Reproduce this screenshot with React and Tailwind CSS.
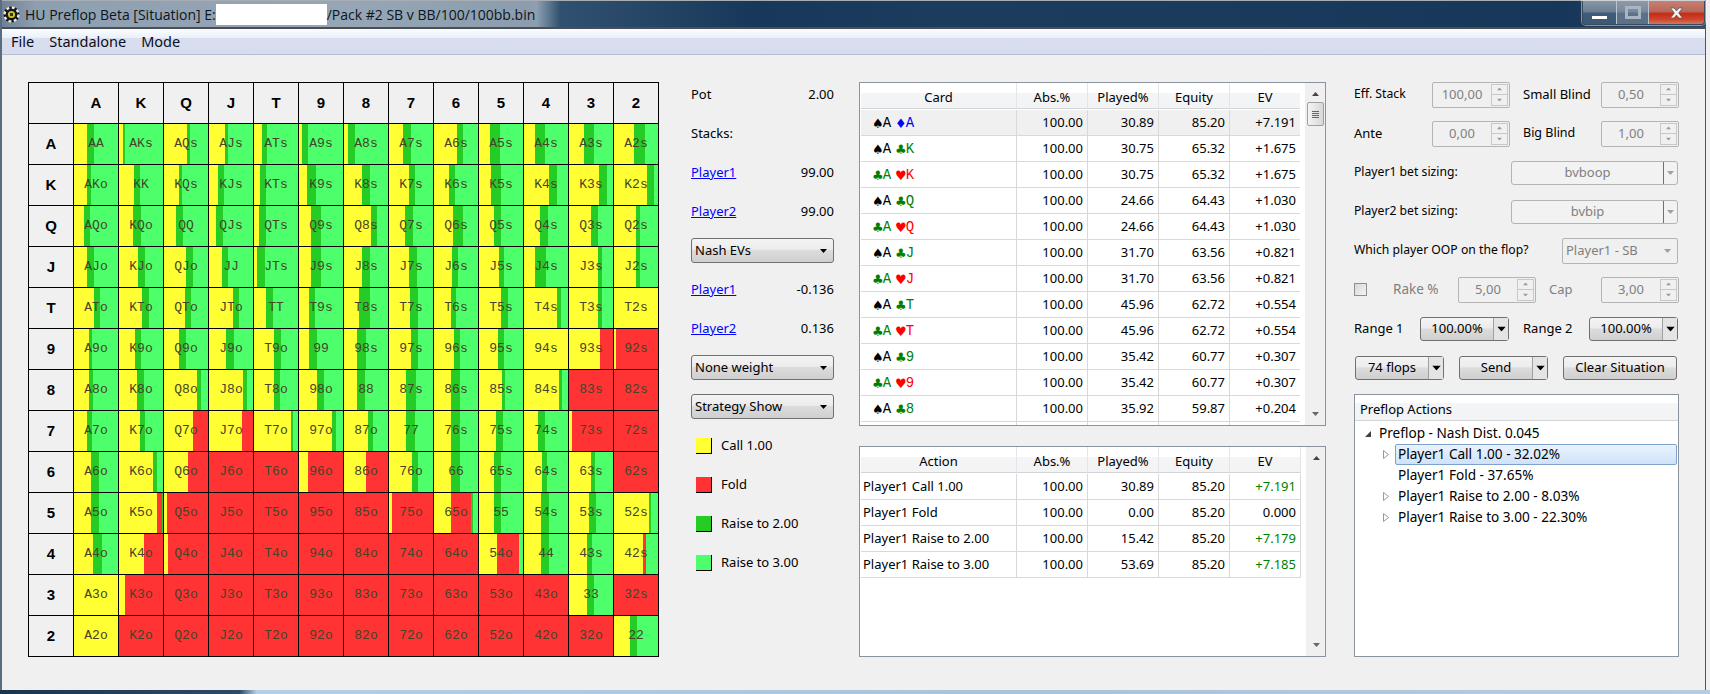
import React from "react";

const RANKS = ["A","K","Q","J","T","9","8","7","6","5","4","3","2"];
const Y = "#ffff33", R = "#ff3333", D = "#26cc26", L = "#4dff6b";

// each cell: [yellow%, red%, darkGreen%]; the rest is light green
const M = [
  [[29,0,16],[8,0,6],[52,0,7],[36,0,7],[18,0,11],[6,0,14],[9,0,17],[32,0,18],[52,0,13],[25,0,22],[24,0,23],[33,0,23],[45,0,25]],
  [[29,0,9],[33,0,15],[35,0,6],[20,0,14],[13,0,14],[18,0,20],[42,0,16],[45,0,14],[35,0,13],[27,0,22],[56,0,20],[69,0,18],[74,0,16]],
  [[22,0,14],[31,0,18],[27,0,16],[16,0,16],[11,0,16],[27,0,24],[62,0,14],[36,0,18],[43,0,22],[35,0,14],[36,0,18],[49,0,16],[50,0,10]],
  [[29,0,17],[44,0,16],[51,0,16],[29,0,14],[7,0,18],[27,0,24],[42,0,18],[45,0,18],[40,0,14],[45,0,12],[26,0,23],[67,0,9],[50,0,9]],
  [[45,0,15],[53,0,16],[47,0,14],[54,0,14],[27,0,16],[22,0,14],[35,0,23],[47,0,18],[38,0,12],[51,0,16],[76,0,9],[67,0,7],[100,0,0]],
  [[33,0,9],[36,0,15],[34,0,17],[39,0,17],[46,0,16],[23,0,17],[29,0,22],[51,0,15],[46,0,14],[44,0,12],[100,0,0],[71,29,0],[4,96,0]],
  [[33,0,11],[42,0,15],[76,0,7],[78,0,9],[45,0,15],[40,0,17],[29,0,18],[39,0,23],[39,0,19],[53,0,7],[79,0,7],[0,100,0],[0,100,0]],
  [[29,0,13],[47,0,13],[66,34,0],[75,25,0],[83,0,5],[74,0,10],[54,0,11],[39,0,19],[39,0,19],[39,0,15],[32,0,15],[7,93,0],[0,100,0]],
  [[39,0,18],[78,0,8],[54,46,0],[0,100,0],[0,100,0],[20,80,0],[49,51,0],[53,0,13],[39,0,21],[33,0,18],[40,0,13],[49,0,9],[0,100,0]],
  [[39,0,18],[87,11,2],[7,93,0],[0,100,0],[0,100,0],[0,100,0],[0,100,0],[7,93,0],[39,44,5],[33,0,18],[38,0,18],[46,0,16],[80,0,5]],
  [[44,0,20],[56,44,0],[8,92,0],[0,100,0],[0,100,0],[0,100,0],[0,100,0],[0,100,0],[0,100,0],[41,50,0],[38,0,18],[40,0,12],[67,6,0]],
  [[100,0,0],[13,87,0],[0,100,0],[0,100,0],[0,100,0],[0,100,0],[0,100,0],[0,100,0],[0,100,0],[0,100,0],[0,100,0],[42,0,15],[0,100,0]],
  [[100,0,0],[0,100,0],[0,100,0],[0,100,0],[0,100,0],[0,100,0],[0,100,0],[0,100,0],[0,100,0],[0,100,0],[0,100,0],[0,100,0],[36,0,17]],
];

function cellBg([y, r, d]) {
  const a = y, b = y + r, c = y + r + d;
  return `linear-gradient(90deg,${Y} 0 ${a}%,${R} ${a}% ${b}%,${D} ${b}% ${c}%,${L} ${c}% 100%)`;
}
function handName(i, j) {
  if (i === j) return RANKS[i] + RANKS[j];
  return i < j ? RANKS[i] + RANKS[j] + "s" : RANKS[j] + RANKS[i] + "o";
}

const Head = ({ children }) => (
  <div className="bg-[#f0f0f0] flex items-center justify-center font-bold text-[15px] text-black font-['Liberation_Sans',sans-serif]">{children}</div>
);

function RangeGrid() {
  return (
    <div className="mt-[7px] w-[631px] h-[575px] shrink-0 grid grid-cols-[repeat(14,44px)] grid-rows-[repeat(14,40px)] gap-px p-px bg-black">
      <Head />
      {RANKS.map((r) => <Head key={r}>{r}</Head>)}
      {RANKS.map((r, i) => (
        <React.Fragment key={r}>
          <Head>{r}</Head>
          {RANKS.map((_, j) => (
            <div key={j} style={{ background: cellBg(M[i][j]) }} className="flex items-center justify-center font-['Liberation_Mono',monospace] text-[13px] text-[#44442a]">
              {handName(i, j)}
            </div>
          ))}
        </React.Fragment>
      ))}
    </div>
  );
}

const Tri = ({ className = "" }) => (
  <svg width="7" height="4" viewBox="0 0 7 4" className={className}><path d="M0 0h7L3.5 4z" fill="currentColor" /></svg>
);

const Select = ({ children }) => (
  <div className="w-full h-[25px] border border-[#707070] rounded-[3px] bg-[linear-gradient(#f4f4f4_0%,#ececec_45%,#dcdcdc_50%,#cfcfcf_100%)] flex items-center justify-between pl-[3px] pr-[6px] text-black">
    <span>{children}</span>
    <Tri />
  </div>
);

const InfoRow = ({ left, right, link }) => (
  <div className="h-[39px] flex items-center justify-between">
    <span className={link ? "text-[#0000ff] underline" : ""}>{left}</span>
    <span>{right}</span>
  </div>
);

const Legend = ({ color, children }) => (
  <div className="h-[39px] flex items-center pl-[5px] gap-[9px]">
    <span className={`w-[16px] h-[16px] border-b border-r border-black ${color}`} />
    <span>{children}</span>
  </div>
);

function MiddleColumn() {
  return (
    <div className="ml-[32px] w-[143px] shrink-0 flex flex-col">
      <InfoRow left="Pot" right="2.00" />
      <InfoRow left="Stacks:" />
      <InfoRow link left="Player1" right="99.00" />
      <InfoRow link left="Player2" right="99.00" />
      <div className="h-[39px] flex items-center"><Select>Nash EVs</Select></div>
      <InfoRow link left="Player1" right="-0.136" />
      <InfoRow link left="Player2" right="0.136" />
      <div className="h-[39px] flex items-center"><Select>None weight</Select></div>
      <div className="h-[39px] flex items-center"><Select>Strategy Show</Select></div>
      <Legend color="bg-[#ffff33]">Call 1.00</Legend>
      <Legend color="bg-[#ff3333]">Fold</Legend>
      <Legend color="bg-[#26cc26]">Raise to 2.00</Legend>
      <Legend color="bg-[#4dff6b]">Raise to 3.00</Legend>
    </div>
  );
}

const COLS = "grid grid-cols-[156px_71px_71px_71px_71px] w-[440px]";

const HeaderRow = ({ first }) => (
  <div className="h-[26px] flex shrink-0 bg-[linear-gradient(#ffffff_0%,#ffffff_40%,#f3f5f7_42%,#f1f3f5_100%)] border-b border-[#d5d5d5]">
    <div className={COLS}>
      {[first, "Abs.%", "Played%", "Equity", "EV"].map((h) => (
        <div key={h} className="flex items-center justify-center border-r border-[#e3e5e8] pt-[4px]">{h}</div>
      ))}
    </div>
  </div>
);

const Cell = ({ children, cls = "" }) => (
  <div className={`h-[26px] flex items-center justify-end pr-[4px] pt-[1px] border-r border-b border-[#d9d9d9] ${cls}`}>{children}</div>
);

const SUIT = { s: ["♠", "text-black"], c: ["♣", "text-[#008000]"], h: ["♥", "text-[#ff0000]"], d: ["♦", "text-[#0000ff]"] };
const CardPart = ({ suit, rank }) => (
  <span className={`${SUIT[suit][1]} inline-flex items-center w-[20px]`}>
    <span className="text-[13px] font-['DejaVu_Sans',sans-serif] leading-none -mr-[1px]">{SUIT[suit][0]}</span>
    <span className="font-['Liberation_Mono',monospace] text-[14px]">{rank}</span>
  </span>
);

const CARDS = [
  ["s","A","d","A","100.00","30.89","85.20","+7.191"],
  ["s","A","c","K","100.00","30.75","65.32","+1.675"],
  ["c","A","h","K","100.00","30.75","65.32","+1.675"],
  ["s","A","c","Q","100.00","24.66","64.43","+1.030"],
  ["c","A","h","Q","100.00","24.66","64.43","+1.030"],
  ["s","A","c","J","100.00","31.70","63.56","+0.821"],
  ["c","A","h","J","100.00","31.70","63.56","+0.821"],
  ["s","A","c","T","100.00","45.96","62.72","+0.554"],
  ["c","A","h","T","100.00","45.96","62.72","+0.554"],
  ["s","A","c","9","100.00","35.42","60.77","+0.307"],
  ["c","A","h","9","100.00","35.42","60.77","+0.307"],
  ["s","A","c","8","100.00","35.92","59.87","+0.204"],
];

const ACTIONS = [
  ["Player1 Call 1.00","100.00","30.89","85.20","+7.191"],
  ["Player1 Fold","100.00","0.00","85.20","0.000"],
  ["Player1 Raise to 2.00","100.00","15.42","85.20","+7.179"],
  ["Player1 Raise to 3.00","100.00","53.69","85.20","+7.185"],
];

const ScrollBar = ({ thumb }) => (
  <div className="w-[20px] shrink-0 ml-[5px] bg-[#f0f0f0] flex flex-col items-center justify-between py-[9px] text-[#444]">
    <div className="flex flex-col items-center gap-[6px]">
      <Tri className="rotate-180" />
      {thumb ? (
        <div className="w-[17px] h-[24px] -mb-[8px] border border-[#a0a0a0] rounded-[2px] bg-[linear-gradient(90deg,#f4f4f4,#d8d8d8)] flex flex-col items-center justify-center gap-[1px]">
          <span className="w-[7px] h-px bg-[#666]" /><span className="w-[7px] h-px bg-[#666]" /><span className="w-[7px] h-px bg-[#666]" /><span className="w-[7px] h-px bg-[#666]" />
        </div>
      ) : null}
    </div>
    <Tri className="text-[#666]" />
  </div>
);

function TablesColumn() {
  return (
    <div className="ml-[25px] mt-[7px] w-[467px] shrink-0 flex flex-col gap-[20px]">
      <div className="h-[344px] border border-[#8a939f] bg-white flex overflow-hidden">
        <div className="w-[440px] flex flex-col overflow-hidden ml-px">
          <HeaderRow first="Card" />
          <div className="h-[1px] shrink-0" />
          {CARDS.map((r, i) => (
            <div key={i} className={`${COLS} shrink-0 ${i === 0 ? "bg-[#f0f0f0]" : ""}`}>
              <div className="h-[26px] flex items-center pl-[11px] gap-[3px] pt-[1px] border-r border-b border-[#d9d9d9]">
                <CardPart suit={r[0]} rank={r[1]} />
                <CardPart suit={r[2]} rank={r[3]} />
              </div>
              {r.slice(4).map((v, k) => <Cell key={k}>{v}</Cell>)}
            </div>
          ))}
          <div className={`${COLS} shrink-0`}><div className="h-[26px] border-r border-[#d9d9d9]" /><div className="h-[26px] border-r border-[#d9d9d9]" /><div className="h-[26px] border-r border-[#d9d9d9]" /><div className="h-[26px] border-r border-[#d9d9d9]" /><div className="h-[26px] border-r border-[#d9d9d9]" /></div>
        </div>
        <ScrollBar thumb />
      </div>
      <div className="h-[211px] border border-[#8a939f] bg-white flex overflow-hidden">
        <div className="w-[440px] flex flex-col ml-px">
          <HeaderRow first="Action" />
          <div className="h-[1px] shrink-0" />
          {ACTIONS.map((r, i) => (
            <div key={i} className={`${COLS} shrink-0`}>
              <div className="h-[26px] flex items-center pl-[2px] pt-[1px] border-r border-b border-[#d9d9d9]">{r[0]}</div>
              {r.slice(1, 4).map((v, k) => <Cell key={k}>{v}</Cell>)}
              <Cell cls={r[4].startsWith("+") ? "text-[#008000]" : ""}>{r[4]}</Cell>
            </div>
          ))}
        </div>
        <ScrollBar />
      </div>
    </div>
  );
}

const Spin = ({ value, w = "w-[78px]" }) => (
  <div className={`${w} h-[26px] shrink-0 border border-[#b4b4b4] rounded-[2px] flex items-center text-[#808080]`}>
    <span className="flex-1 text-center">{value}</span>
    <div className="w-[17px] h-[22px] mr-[1px] flex flex-col border border-[#c8c8c8] text-[#999]">
      <div className="flex-1 flex items-center justify-center border-b border-[#c8c8c8]"><Tri className="rotate-180 scale-75" /></div>
      <div className="flex-1 flex items-center justify-center"><Tri className="scale-75" /></div>
    </div>
  </div>
);

const Row39 = ({ children }) => <div className="h-[39px] flex items-center">{children}</div>;
const Lbl = ({ children, w = "w-[78px]", cls = "" }) => <span className={`${w} shrink-0 ${cls}`}>{children}</span>;

const SizingCombo = ({ children }) => (
  <div className="ml-auto mr-px w-[167px] h-[24px] border border-[#b4b4b4] rounded-[3px] bg-[#f2f2f2] flex items-center text-[#808080]">
    <span className="flex-1 text-center">{children}</span>
    <span className="w-[14px] h-[22px] border-l border-[#707070] flex items-center justify-center text-[#a0a0a0]"><Tri /></span>
  </div>
);

const SplitBtn = ({ children, w = "w-[89px]" }) => (
  <div className={`${w} h-[24px] shrink-0 border border-[#707070] rounded-[3px] bg-[linear-gradient(#f4f4f4_0%,#ececec_45%,#dcdcdc_50%,#cfcfcf_100%)] flex items-center text-black`}>
    <span className="flex-1 text-center">{children}</span>
    <span className="w-[15px] h-[22px] border-l border-[#a0a0a0] flex items-center justify-center bg-[#e4e4e4]"><Tri className="scale-125" /></span>
  </div>
);

const TreeRow = ({ children, selected, arrow }) => (
  <div className="h-[21px] flex items-center">
    <span className="w-[24px] shrink-0 flex justify-end pr-[6px]">
      {arrow ? (
        <svg width="6" height="9" viewBox="0 0 6 9"><path d="M.5.5l5 4-5 4z" fill="#fff" stroke="#9a9a9a" /></svg>
      ) : null}
    </span>
    <span className={`flex-1 h-[21px] mr-px flex items-center pl-[2px] rounded-[2px] border ${selected ? "border-[#7da2ce] bg-[linear-gradient(#eaf3fe,#cfe2fa)]" : "border-transparent"}`}>
      {children}
    </span>
  </div>
);

function RightColumn() {
  return (
    <div className="ml-[28px] w-[325px] shrink-0 flex flex-col">
      <Row39>
        <Lbl cls="text-[12.2px]">Eff. Stack</Lbl><Spin value="100,00" /><span className="w-[13px]" /><Lbl>Small Blind</Lbl><Spin value="0,50" />
      </Row39>
      <Row39>
        <Lbl>Ante</Lbl><Spin value="0,00" /><span className="w-[13px]" /><Lbl cls="text-[12.5px]">Big Blind</Lbl><Spin value="1,00" />
      </Row39>
      <Row39><span className="text-[12.2px]">Player1 bet sizing:</span><SizingCombo>bvboop</SizingCombo></Row39>
      <Row39><span className="text-[12.2px]">Player2 bet sizing:</span><SizingCombo>bvbip</SizingCombo></Row39>
      <Row39>
        <span className="text-[12.2px]">Which player OOP on the flop?</span>
        <div className="ml-auto mr-px w-[116px] h-[26px] border border-[#b4b4b4] rounded-[2px] flex items-center justify-between pl-[3px] pr-[6px] text-[#808080]">
          <span>Player1 - SB</span><Tri className="text-[#a0a0a0]" />
        </div>
      </Row39>
      <Row39>
        <span className="w-[13px] h-[13px] shrink-0 border border-[#8e8f8f] bg-[linear-gradient(135deg,#d8d8d8,#f4f4f4)]" />
        <Lbl w="w-[65px]" cls="pl-[26px] box-content -mr-[0px] text-[13.5px] text-[#808080] whitespace-nowrap">Rake %</Lbl>
        <Spin value="5,00" /><span className="w-[13px]" />
        <Lbl w="w-[52px]" cls="text-[#808080]">Cap</Lbl>
        <Spin value="3,00" />
      </Row39>
      <Row39>
        <Lbl w="w-[66px]">Range 1</Lbl><SplitBtn>100.00%</SplitBtn><span className="w-[14px]" /><Lbl w="w-[66px]">Range 2</Lbl><SplitBtn>100.00%</SplitBtn>
      </Row39>
      <Row39>
        <span className="w-px" />
        <SplitBtn>74 flops</SplitBtn><span className="w-[15px]" /><SplitBtn>Send</SplitBtn><span className="w-[15px]" />
        <div className="w-[114px] h-[24px] border border-[#707070] rounded-[3px] bg-[linear-gradient(#f4f4f4_0%,#ececec_45%,#dcdcdc_50%,#cfcfcf_100%)] flex items-center justify-center text-black">Clear Situation</div>
      </Row39>
      <div className="mt-[7px] h-[263px] border border-[#8a939f] bg-white flex flex-col">
        <div className="h-[26px] pt-[4px] pl-[5px] flex items-center border-b border-[#d5d5d5] bg-[linear-gradient(#ffffff_0%,#ffffff_30%,#f3f5f7_32%,#f1f3f5_100%)]">Preflop Actions</div>
        <div className="pt-[2px] flex flex-col text-[13.6px]">
          <div className="h-[21px] flex items-center">
            <span className="w-[24px] shrink-0 flex justify-end pr-[8px]"><svg width="6" height="6" viewBox="0 0 6 6"><path d="M6 0v6H0z" fill="#404040" /></svg></span>
            <span>Preflop - Nash Dist. 0.045</span>
          </div>
          <div className="pl-[16px] flex flex-col">
            <TreeRow arrow selected>Player1 Call 1.00 - 32.02%</TreeRow>
            <TreeRow>Player1 Fold - 37.65%</TreeRow>
            <TreeRow arrow>Player1 Raise to 2.00 - 8.03%</TreeRow>
            <TreeRow arrow>Player1 Raise to 3.00 - 22.30%</TreeRow>
          </div>
        </div>
      </div>
    </div>
  );
}

const ChipIcon = () => (
  <svg width="17" height="17" viewBox="0 0 17 17" className="shrink-0">
    <circle cx="8.5" cy="8.5" r="8" fill="#161616" />
    <circle cx="8.5" cy="8.5" r="7" fill="none" stroke="#e8e8e8" strokeWidth="2.4" strokeDasharray="3 2.5" />
    <circle cx="8.5" cy="8.5" r="3.6" fill="#c9c42a" />
    <path d="M7 7h3v3H7z" fill="#333" />
  </svg>
);

function TitleBar() {
  return (
    <div className="h-[29px] shrink-0 flex items-stretch border-t border-[#a8adb3] border-b-2 border-b-[#4a4f55] bg-[linear-gradient(90deg,#6f8196_0%,#8e9fb1_2%,#96a6b6_20%,#8b9dae_31%,#8d9fb0_31.4%,#2f506f_32.8%,#2b4a69_36%,#17385a_44%,#1c3c5e_55%,#1b3b5d_70%,#17375a_92%,#2c4a68_100%)]">
      <div className="pl-[1px] flex items-center gap-[5px] text-[14px] text-[#0b1420] whitespace-nowrap font-['Open_Sans',sans-serif]">
        <ChipIcon />
        <span className="-mr-[5px]">HU Preflop Beta [Situation] E:</span>
        <span className="w-[111px] h-[21px] bg-white -mr-[5px]" />
        <span>/Pack #2 SB v BB/100/100bb.bin</span>
      </div>
      <div className="ml-auto w-[123px] h-[24px] flex border border-t-0 border-[#3a4a5a] rounded-b-[4px] overflow-hidden shadow-[0_0_0_1px_rgba(255,255,255,0.45)]">
        <div className="w-[34px] border-r border-[#b8c4d0] bg-[linear-gradient(#8796a6_0%,#6f8093_45%,#3f5a78_55%,#3c5876_100%)] flex items-end justify-center pb-[5px]">
          <span className="w-[15px] h-[3px] bg-white" />
        </div>
        <div className="w-[32px] border-r border-[#b8c4d0] bg-[linear-gradient(#8c9aa8_0%,#788a9c_45%,#5a7188_55%,#5a7188_100%)] flex items-center justify-center">
          <span className="w-[16px] h-[13px] border-[3px] border-[#a9b5c0]" />
        </div>
        <div className="flex-1 bg-[linear-gradient(#c97f72_0%,#b8695a_45%,#c42d14_55%,#d0452c_80%,#c97a6a_100%)] flex items-center justify-center">
          <svg width="15" height="12" viewBox="0 0 15 12"><path d="M1.5 1h3.6l2.4 3 2.4-3h3.6L9.6 6l3.9 5H9.9L7.5 8l-2.4 3H1.5l3.9-5z" fill="#f4f4f4" stroke="#555" strokeWidth=".7" /></svg>
        </div>
      </div>
    </div>
  );
}

function MenuBar() {
  return (
    <div className="h-[26px] shrink-0 flex items-center gap-[15px] pl-[9px] border-b border-[#b7bed2] bg-[linear-gradient(#fbfcfe_0%,#eaf0fa_36%,#d9deef_38%,#d6dbee_100%)] text-[14.5px] text-[#0a1020] font-['Noto_Sans',sans-serif]">
      <span>File</span><span>Standalone</span><span>Mode</span>
    </div>
  );
}

export default function App() {
  return (
    <div className="w-[1710px] h-[694px] overflow-hidden flex flex-col bg-[#f0f0f0]">
      <div className="flex-1 min-h-0 flex flex-col border-l-[2px] border-l-[#5a6c80] border-r border-r-[#4d5560] mr-[4px]">
        <TitleBar />
        <MenuBar />
        <div className="flex-1 min-h-0 flex items-start pl-[26px] pt-[20px] text-[13px] text-black font-['Noto_Sans',sans-serif]">
          <RangeGrid />
          <MiddleColumn />
          <TablesColumn />
          <RightColumn />
        </div>
      </div>
      <div className="h-[4px] shrink-0 bg-[linear-gradient(90deg,#1a3450_0%,#2b4a68_14%,#b4cde8_15%,#a9c3dd_60%,#b6cce0_100%)]" />
    </div>
  );
}
